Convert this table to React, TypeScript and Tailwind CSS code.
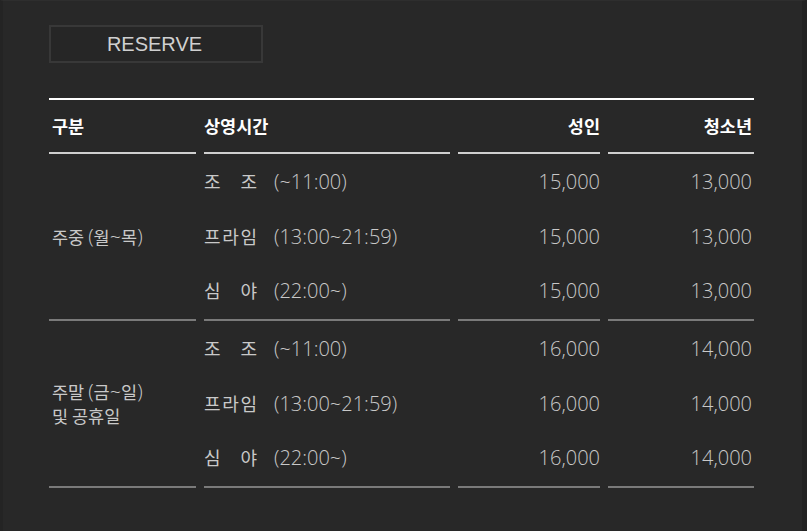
const font = { fontFamily: '"Noto Sans CJK KR", "Noto Sans", sans-serif' };
const latin = { fontFamily: '"Open Sans", "Noto Sans CJK KR", sans-serif' };

type Row = { label: string; time: string; adult: string; teen: string };

const groups: { name: string[]; rows: Row[] }[] = [
  {
    name: ["주중 (월~목)"],
    rows: [
      { label: "조조", time: "(~11:00)", adult: "15,000", teen: "13,000" },
      { label: "프라임", time: "(13:00~21:59)", adult: "15,000", teen: "13,000" },
      { label: "심야", time: "(22:00~)", adult: "15,000", teen: "13,000" },
    ],
  },
  {
    name: ["주말 (금~일)", "및 공휴일"],
    rows: [
      { label: "조조", time: "(~11:00)", adult: "16,000", teen: "14,000" },
      { label: "프라임", time: "(13:00~21:59)", adult: "16,000", teen: "14,000" },
      { label: "심야", time: "(22:00~)", adult: "16,000", teen: "14,000" },
    ],
  },
];

// 한글과 라틴 문자를 나눠서 라틴 쪽은 조금 크게
function Mixed({ text }: { text: string }) {
  const parts = text.match(/[\uAC00-\uD7A3 ]+|[^\uAC00-\uD7A3 ]+/g) ?? [];
  return (
    <>
      {parts.map((p, i) =>
        /[\uAC00-\uD7A3]/.test(p) || p.trim() === "" ? (
          <span key={i} className="whitespace-pre">{p}</span>
        ) : (
          <span key={i} className="text-[20px] font-light" style={latin}>
            {p}
          </span>
        )
      )}
    </>
  );
}

function Label({ text }: { text: string }) {
  // 두 글자는 세 글자 폭에 맞춰 양쪽 정렬
  return (
    <span className="inline-flex w-[53px] justify-between">
      {text.split("").map((c, i) => (
        <span key={i}>{c}</span>
      ))}
    </span>
  );
}

export default function App() {
  return (
    <div className="min-h-[531px] w-[807px] bg-[#282828] border-l-[3px] border-l-[#242424] border-r-[5px] border-r-[#222222] border-t border-t-[#2e2e2e]" style={font}>
      <div className="pl-[46px] pt-[24px]">
        <div className="flex h-[38px] w-[214px] items-center justify-center border-2 border-[#383838] bg-[#262626]">
          <span className="pr-[3px] text-[20px] text-[#d0d0d0]" style={{ fontFamily: '"Liberation Sans", Arial, sans-serif' }}>
            RESERVE
          </span>
        </div>
      </div>

      <div className="ml-[46px] mt-[35px] grid w-[705px] grid-cols-[147px_246px_142px_146px] gap-x-2 border-t-2 border-white">
        {/* 헤더 */}
        <div className="flex h-[54px] items-center border-b-2 border-[#cfcfcf] pl-[3px] text-[17.5px] font-bold text-white">구분</div>
        <div className="flex h-[54px] items-center border-b-2 border-[#cfcfcf] text-[17.5px] font-bold text-white">상영시간</div>
        <div className="flex h-[54px] items-center justify-end border-b-2 border-[#cfcfcf] text-[17.5px] font-bold text-white">성인</div>
        <div className="flex h-[54px] items-center justify-end border-b-2 border-[#cfcfcf] pr-[2px] text-[17.5px] font-bold text-white">청소년</div>

        {groups.map((g, gi) => (
          <div key={gi} className="contents">
            <div className="row-span-3 flex flex-col justify-center border-b-2 border-[#7a7a7a] pl-[3px] text-[17.5px] leading-[24px] text-[#c9c9c9]">
              {g.name.map((n) => (
                <div key={n}>
                  <Mixed text={n} />
                </div>
              ))}
            </div>
            {g.rows.map((r, ri) => {
              const last = ri === 2 ? "border-b-2 border-[#7a7a7a] h-[57px] pb-[2px]" : "h-[55px]";
              return (
                <div key={ri} className="contents">
                  <div className={`flex items-center text-[18px] text-[#c9c9c9] ${last}`}>
                    <Label text={r.label} />
                    <span className="ml-[17px] text-[20px] font-light" style={latin}>{r.time}</span>
                  </div>
                  <div className={`flex items-center justify-end text-[20px] font-light text-[#c9c9c9] ${last}`} style={latin}>{r.adult}</div>
                  <div className={`flex items-center justify-end pr-[2px] text-[20px] font-light text-[#c9c9c9] ${last}`} style={latin}>{r.teen}</div>
                </div>
              );
            })}
          </div>
        ))}
      </div>
    </div>
  );
}
